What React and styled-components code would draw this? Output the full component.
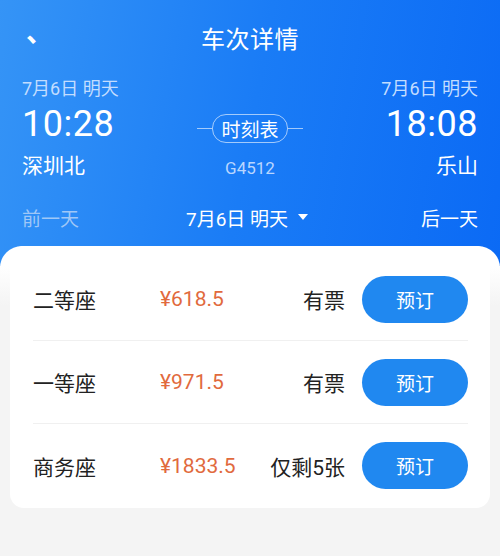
import React from 'react'
import styled, { createGlobalStyle } from 'styled-components'

//x//////////////////////////////////////////////////
// Data
//x//////////////////////////////////////////////////

const seats = [
  { name: '二等座', price: '¥618.5', stock: '有票' },
  { name: '一等座', price: '¥971.5', stock: '有票' },
  { name: '商务座', price: '¥1833.5', stock: '仅剩5张' },
]

//x//////////////////////////////////////////////////
// App
//x//////////////////////////////////////////////////

export default function App() {
  return (
    <>
      <GlobalStyle />
      <SPage>
        <SHeader>
          <SNavBar>
            <SBack>、</SBack>
            <STitle>车次详情</STitle>
            <span />
          </SNavBar>

          <SStations>
            <SStation>
              <SDate>7月6日 明天</SDate>
              <STime>10:28</STime>
              <SName>深圳北</SName>
            </SStation>

            <SMiddle>
              <SPillLine>
                <SPill>时刻表</SPill>
              </SPillLine>
              <STrainNo>G4512</STrainNo>
            </SMiddle>

            <SStation $right>
              <SDate>7月6日 明天</SDate>
              <STime>18:08</STime>
              <SName>乐山</SName>
            </SStation>
          </SStations>

          <SDayBar>
            <SDayLink $dim>前一天</SDayLink>
            <SDayPicker>
              7月6日 明天
              <SCaret />
            </SDayPicker>
            <SDayLink>后一天</SDayLink>
          </SDayBar>
        </SHeader>

        <SSheet>
          <SCard>
            {seats.map((seat) => (
              <SRow key={seat.name}>
                <SSeat>{seat.name}</SSeat>
                <SPrice>{seat.price}</SPrice>
                <SStock>{seat.stock}</SStock>
                <SBook>预订</SBook>
              </SRow>
            ))}
          </SCard>
        </SSheet>
      </SPage>
    </>
  )
}

//x//////////////////////////////////////////////////
// Styles
//x//////////////////////////////////////////////////

const GlobalStyle = createGlobalStyle`
  html, body {
    margin: 0;
    padding: 0;
    background: #f4f4f4;
  }
  body {
    font-family: Roboto, "Noto Sans CJK SC", sans-serif;
  }
`

const SPage = styled.div`
  width: 500px;
  height: 556px;
  overflow: hidden;
  display: flex;
  flex-direction: column;
  background: #f4f4f4;
`

const SHeader = styled.header`
  background: linear-gradient(100deg, #3594f6 0%, #1a7cf6 50%, #0b6af5 100%);
  color: #fff;
  padding-bottom: 20px;
  margin-bottom: -20px;
`

const SNavBar = styled.div`
  height: 74px;
  display: grid;
  grid-template-columns: 1fr auto 1fr;
  align-items: center;
  padding: 0 22px;
`

const SBack = styled.span`
  font-size: 27px;
  font-weight: 700;
  line-height: 1;
  padding: 0 0 8px 4px;
  color: #fff;
`

const STitle = styled.h1`
  margin: 0;
  font-size: 24px;
  font-weight: 400;
  letter-spacing: 0.5px;
`

const SStations = styled.div`
  display: flex;
  justify-content: space-between;
  align-items: flex-start;
  padding: 0 22px;
`

const SStation = styled.div`
  display: flex;
  flex-direction: column;
  align-items: ${({ $right }) => ($right ? 'flex-end' : 'flex-start')};
  width: 130px;
`

const SDate = styled.div`
  font-size: 18px;
  line-height: 30px;
  color: #c3ddff;
`

const STime = styled.div`
  font-size: 36px;
  line-height: 40px;
  letter-spacing: 0.5px;
`

const SName = styled.div`
  font-size: 21px;
  line-height: 44px;
`

const SMiddle = styled.div`
  display: flex;
  flex-direction: column;
  align-items: center;
  padding-top: 40px;
`

const SPillLine = styled.div`
  display: flex;
  align-items: center;
  &::before,
  &::after {
    content: '';
    width: 15px;
    height: 1px;
    background: rgba(255, 255, 255, 0.6);
  }
`

const SPill = styled.span`
  border: 1px solid rgba(255, 255, 255, 0.6);
  border-radius: 14px;
  height: 27px;
  padding: 0 8px;
  display: flex;
  align-items: center;
  font-size: 19px;
`

const STrainNo = styled.div`
  margin-top: 15px;
  font-size: 17px;
  color: #b9d6ff;
`

const SDayBar = styled.div`
  height: 58px;
  display: flex;
  justify-content: space-between;
  align-items: center;
  padding: 0 22px;
`

const SDayLink = styled.span`
  font-size: 19px;
  color: ${({ $dim }) => ($dim ? '#9fc7f7' : '#fff')};
`

const SDayPicker = styled.span`
  display: flex;
  align-items: center;
  gap: 10px;
  font-size: 19px;
  margin-left: -6px;
`

const SCaret = styled.i`
  width: 0;
  height: 0;
  border-left: 5px solid transparent;
  border-right: 5px solid transparent;
  border-top: 6px solid #fff;
`

const SSheet = styled.main`
  flex: 1;
  border-radius: 22px 22px 0 0;
  background: linear-gradient(#fff 0, #fff 20px, #f4f4f4 60px);
  padding: 0 10px;
`

const SCard = styled.section`
  background: #fff;
  border-radius: 14px;
  padding-top: 12px;
  height: 262px;
  box-sizing: border-box;
`

const SRow = styled.div`
  height: 83px;
  box-sizing: border-box;
  margin: 0 22px 0 23px;
  display: flex;
  align-items: center;
  border-bottom: 1px solid #f0f0f0;
  &:last-child {
    border-bottom: none;
  }
`

const SSeat = styled.span`
  width: 127px;
  font-size: 21px;
  color: #222;
`

const SPrice = styled.span`
  font-size: 21px;
  color: #e16a3d;
`

const SStock = styled.span`
  flex: 1;
  text-align: right;
  font-size: 21px;
  color: #222;
  margin-right: 17px;
`

const SBook = styled.button`
  width: 106px;
  height: 47px;
  border: none;
  border-radius: 24px;
  background: #2088f0;
  color: #fff;
  font-family: inherit;
  font-size: 19px;
  padding: 0;
`
